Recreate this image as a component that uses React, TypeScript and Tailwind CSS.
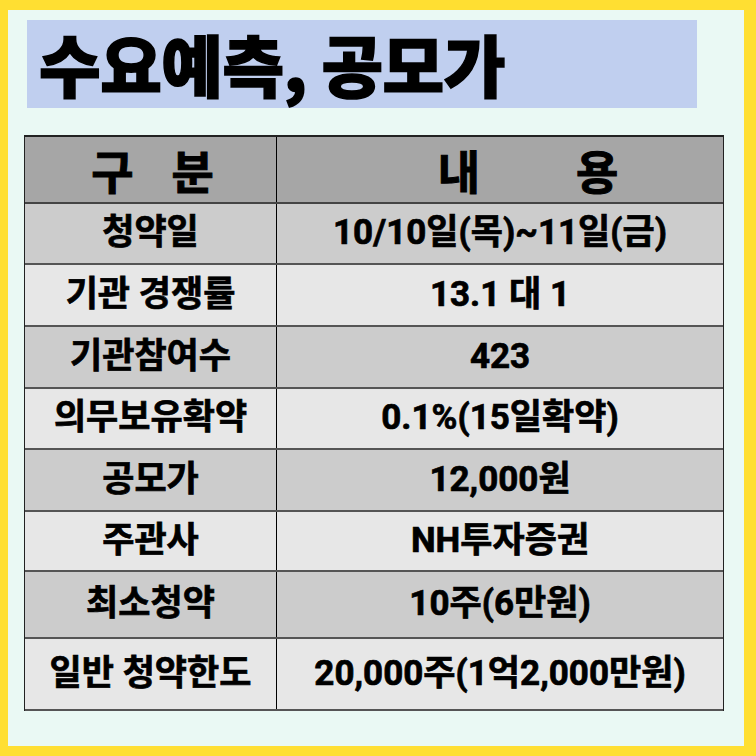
import React from 'react'

const rows: { label: string; value: string; h: string }[] = [
  { label: '청약일', value: '10/10일(목)~11일(금)', h: 'h-[61px]' },
  { label: '기관 경쟁률', value: '13.1 대 1', h: 'h-[62px]' },
  { label: '기관참여수', value: '423', h: 'h-[62px]' },
  { label: '의무보유확약', value: '0.1%(15일확약)', h: 'h-[61px]' },
  { label: '공모가', value: '12,000원', h: 'h-[62px]' },
  { label: '주관사', value: 'NH투자증권', h: 'h-[60px]' },
  { label: '최소청약', value: '10주(6만원)', h: 'h-[67px]' },
  { label: '일반 청약한도', value: '20,000주(1억2,000만원)', h: 'h-[72px]' },
]

export default function App() {
  return (
    <div className="w-[756px] h-[756px] bg-[#FFDF32] pt-[10px] pl-2 pr-3 pb-[10px] font-['Roboto','Noto_Sans_CJK_KR',sans-serif]">
      <div className="h-full bg-[#EAF9F4] pt-[10px]">
        <div className="ml-[19px] w-[670px] h-[88px] bg-[#C0CFEF] flex items-center pl-[12px]">
          <h1 className="text-[67px] font-black leading-none tracking-[-0.5px] text-black font-['Noto_Sans_CJK_KR',sans-serif] [-webkit-text-stroke:1.5px_black] -mt-[4px]">
            수요예측, 공모가
          </h1>
        </div>

        <div className="ml-4 mt-[27px] w-[700px] border-l border-r border-t-2 border-[#222] text-black">
          <div className="flex h-[67px] bg-[#A6A6A6] border-b-2 border-[#444] text-[46px] font-bold font-['Noto_Sans_CJK_KR',sans-serif] [-webkit-text-stroke:1px_black]">
            <div className="w-[252px] border-r border-black flex items-center justify-center gap-[38px] pl-[4px]">
              <span>구</span>
              <span>분</span>
            </div>
            <div className="flex-1 flex items-center justify-center gap-[96px] pl-[56px]">
              <span>내</span>
              <span>용</span>
            </div>
          </div>
          {rows.map((r, i) => (
            <div
              key={r.label}
              className={`flex ${r.h} border-b-2 border-[#555] ${i % 2 === 0 ? 'bg-[#CCCCCC]' : 'bg-[#E7E7E7]'} text-[35px] font-bold [-webkit-text-stroke:0.7px_black]`}
            >
              <div className="w-[252px] border-r border-black flex items-center justify-center">
                {r.label}
              </div>
              <div className="flex-1 flex items-center justify-center">
                {r.value}
              </div>
            </div>
          ))}
        </div>
      </div>
    </div>
  )
}
